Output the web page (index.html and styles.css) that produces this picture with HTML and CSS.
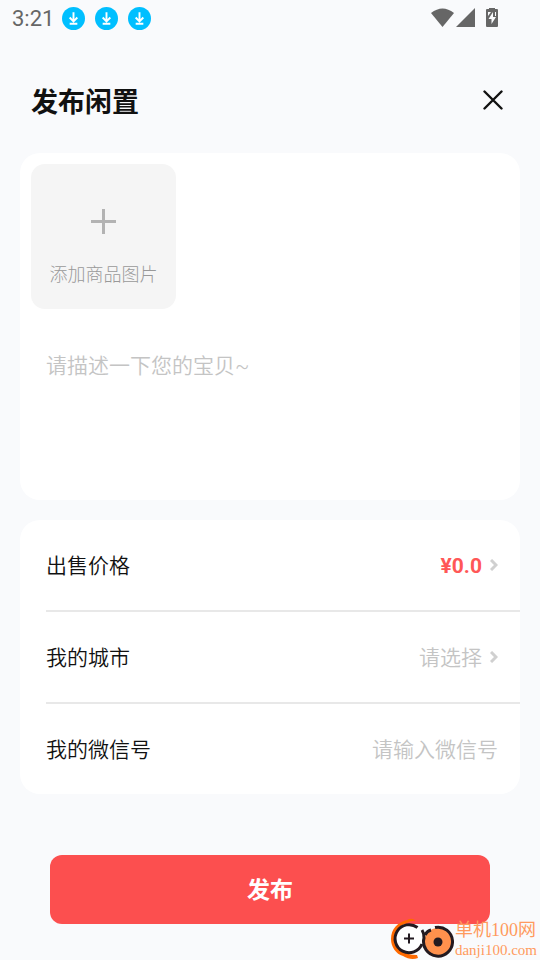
FILE: index.html
```html
<!DOCTYPE html>
<html lang="zh-CN">
<head>
<meta charset="utf-8">
<meta name="viewport" content="width=device-width, initial-scale=1">
<title>发布闲置</title>
<link rel="stylesheet" href="styles.css">
</head>
<body>
<div class="status">
  <time class="clock">3:21</time>
  <svg class="download" viewBox="0 0 24 24"><circle cx="12" cy="12" r="12"/><path d="M12 5.5v9M8 11l4 4 4-4M8 17.5h8"/></svg>
  <svg class="download" viewBox="0 0 24 24"><circle cx="12" cy="12" r="12"/><path d="M12 5.5v9M8 11l4 4 4-4M8 17.5h8"/></svg>
  <svg class="download" viewBox="0 0 24 24"><circle cx="12" cy="12" r="12"/><path d="M12 5.5v9M8 11l4 4 4-4M8 17.5h8"/></svg>
  <svg class="signals" viewBox="0 0 67 20">
    <path d="M0 5Q11.500-4 23 5L11.500 19z"/>
    <path d="M44 0v19H25z"/>
    <path fill-rule="evenodd" d="M58 0h6v1h2q1 0 1 1v16q0 1-1 1H56q-1 0-1-1V2q0-1 1-1h2zM57 4v4l3-4zM64 4v4h1V4zM62 4l-4.500 7h3v5l4.500-7h-3z"/>
  </svg>
</div>
<header class="header">
  <h1>发布闲置</h1>
  <button class="close" type="button" aria-label="关闭"><svg viewBox="0 0 20 20"><path d="M1.500 1.500l17 17M18.500 1.500l-17 17"/></svg></button>
</header>
<form class="form">
  <section class="card">
    <button class="add" type="button">
      <svg viewBox="0 0 25 25"><path d="M12.500 0v25M0 12.500h25"/></svg>
      <span>添加商品图片</span>
    </button>
    <textarea class="describe" aria-label="宝贝描述" placeholder="请描述一下您的宝贝~"></textarea>
  </section>
  <section class="card">
    <div class="row">
      <span>出售价格</span>
      <button class="pick price" type="button" aria-label="出售价格 ¥0.0">¥0.0<svg viewBox="0 0 8 12"><path d="M1 1l5 5-5 5"/></svg></button>
    </div>
    <div class="row">
      <span>我的城市</span>
      <button class="pick" type="button">请选择<svg viewBox="0 0 8 12"><path d="M1 1l5 5-5 5"/></svg></button>
    </div>
    <div class="row">
      <label for="wechat">我的微信号</label>
      <input id="wechat" type="text" placeholder="请输入微信号">
    </div>
  </section>
  <button class="submit" type="submit">发布</button>
</form>
<div class="mark">
  <svg viewBox="0 0 64 42">
    <path d="M26 3Q22-1 17 2C8 4 1 11 1 21c0 8 5 15 12 17 5 3 10 4 15 2l-1-3C14 37 5 31 5 21 5 12 11 7 17 5q5-3 9-2z" fill="#ff6a00"/>
    <circle cx="19" cy="20.500" r="14" fill="#fff"/>
    <path d="M27.500 9.500A14 14 0 1 0 32 26" class="ring"/>
    <path d="M19 15.500v10M14 20.500h10" class="cross"/>
    <circle cx="48" cy="24" r="14" fill="#ff914d"/>
    <path d="M45 9.500A14.500 14.500 0 1 1 34 20q0-5-2-8M35 17q2-4 6-5" class="ring"/>
    <circle cx="48" cy="24" r="4.500" fill="#231a20"/>
  </svg>
  <p><span class="site">单机100网</span><span class="domain">danji100.com</span></p>
</div>
</body>
</html>
```

FILE: styles.css
```css
* {
  box-sizing: border-box;
}

body {
  margin: 0;
  min-height: 100vh;
  background: #f9fafc;
  color: #111;
  font-family: Roboto, "Noto Sans CJK SC", sans-serif;
  font-size: 21px;
  line-height: 30px;
  font-weight: 350;
}

button,
input,
textarea {
  margin: 0;
  padding: 0;
  border: 0;
  background: none;
  color: inherit;
  font: inherit;
}

.status {
  display: flex;
  align-items: center;
  gap: 10px;
  height: 37px;
  padding: 0 42px 0 12px;
}

.clock {
  width: 40px;
  color: #666;
  font-size: 22px;
  font-weight: 400;
}

.download {
  width: 23px;
  height: 23px;
  fill: #00bfff;
}

.download path {
  fill: none;
  stroke: #fff;
  stroke-width: 2;
}

.signals {
  width: 67px;
  height: 20px;
  margin: 0 0 2px auto;
  fill: #666;
}

.header {
  display: flex;
  align-items: center;
  justify-content: space-between;
  height: 116px;
  padding: 10px 37px 0 31px;
}

h1 {
  margin: 0;
  padding-top: 6px;
  font-size: 27px;
  line-height: 40px;
  font-weight: 600;
}

.close {
  display: flex;
}

.close svg {
  width: 20px;
  height: 20px;
  fill: none;
  stroke: #111;
  stroke-width: 2.400;
  stroke-linecap: round;
}

.form {
  display: flex;
  flex-direction: column;
  gap: 20px;
  padding: 0 20px;
}

.card {
  border-radius: 20px;
  background: #fff;
}

.add {
  display: flex;
  flex-direction: column;
  align-items: center;
  gap: 27px;
  width: 145px;
  height: 145px;
  margin: 11px 11px 0;
  padding-top: 45px;
  border-radius: 14px;
  background: #f5f5f5;
  color: #999;
  font-size: 18px;
  font-weight: 300;
  line-height: 28px;
}

.add svg {
  width: 25px;
  height: 25px;
  fill: none;
  stroke: #b3b3b3;
  stroke-width: 3;
}

.describe {
  display: block;
  width: 100%;
  height: 191px;
  padding: 42px 26px 0;
  outline: 0;
  resize: none;
}

::placeholder {
  color: #c4c4c4;
  opacity: 1;
}

.row {
  display: flex;
  align-items: center;
  justify-content: space-between;
  height: 92px;
  margin-left: 26px;
  padding: 2px 22px 0 0;
  border-bottom: 2px solid #e8e8e8;
}

.row:last-child {
  height: 90px;
  border-bottom: 0;
}

.row input {
  flex: 1;
  min-width: 0;
  text-align: right;
  outline: 0;
}

.pick {
  display: flex;
  align-items: center;
  gap: 8px;
  color: #c4c4c4;
}

.price {
  color: #ff5757;
  font-weight: 700;
}

.pick svg {
  width: 8px;
  height: 12px;
  margin-bottom: 3px;
  fill: none;
  stroke: #d0d0d0;
  stroke-width: 3;
}

.submit {
  height: 69px;
  margin: 41px 30px 0;
  padding-top: 2px;
  border-radius: 12px;
  background: #fc4f4f;
  color: #fff;
  font-size: 23px;
  font-weight: 700;
}

.mark {
  position: absolute;
  right: 3px;
  bottom: 0;
  display: flex;
  align-items: center;
  gap: 1px;
  color: #ff9a5e;
}

.mark svg {
  width: 64px;
  height: 42px;
  fill: none;
}

.mark .ring,
.mark .cross {
  stroke: #231a20;
  stroke-width: 3;
}

.mark .cross {
  stroke-width: 2;
}

.mark p {
  margin: 0;
  font-family: "Liberation Serif", "Noto Sans CJK SC", serif;
  font-weight: 400;
}

.site,
.domain {
  display: block;
}

.site {
  font-size: 18px;
  line-height: 22px;
}

.domain {
  font-size: 15px;
  line-height: 18px;
}
```
